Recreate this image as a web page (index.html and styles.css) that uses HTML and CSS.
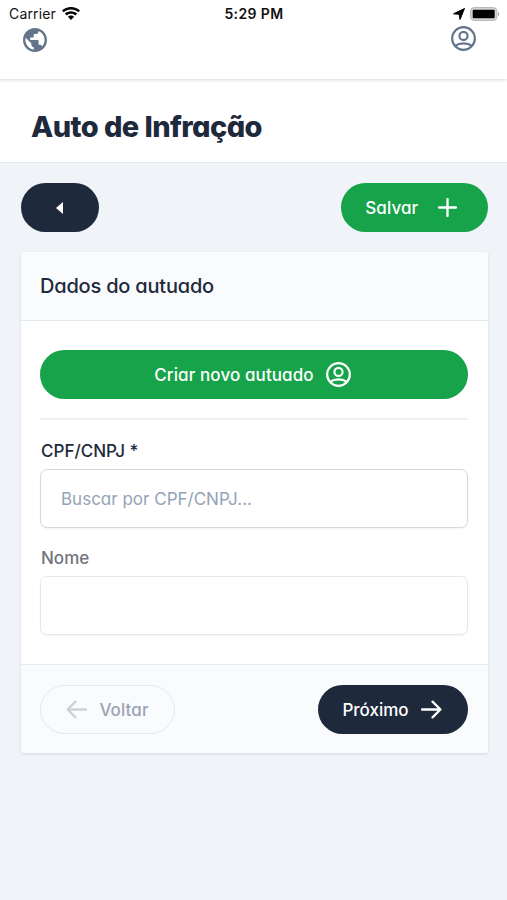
FILE: index.html
```html
<!DOCTYPE html>
<html lang="pt-BR">
<head>
<meta charset="utf-8">
<title>Auto de Infração</title>
<link rel="stylesheet" href="styles.css">
</head>
<body>
<svg class="defs" width="0" height="0" aria-hidden="true">
  <symbol id="user" viewBox="0 0 24 24" fill="none" stroke="currentColor" stroke-width="2.1">
    <circle cx="12" cy="12" r="10.900"/><circle cx="12" cy="9.500" r="3.900"/><path d="M4 19c4-3 12-3 16 0"/>
  </symbol>
</svg>
<header class="topbar">
  <div class="status">
    <div class="status-left"><span class="carrier">Carrier</span>
      <svg class="wifi" viewBox="0 0 18 13"><path d="M9 0c3.500 0 6.600 1.300 9 3.500l-1.700 1.800C14.400 3.500 11.800 2.500 9 2.500S3.600 3.500 1.700 5.300L0 3.500C2.400 1.300 5.500 0 9 0zm0 4.300c2.300 0 4.500.9 6.100 2.300l-1.700 1.800C12.200 7.300 10.700 6.700 9 6.700s-3.200.6-4.400 1.700L2.900 6.600C4.500 5.200 6.700 4.300 9 4.300zm0 4.200c1.200 0 2.300.5 3.100 1.200L9 13 5.900 9.700C6.700 9 7.800 8.500 9 8.500z"/></svg>
    </div>
    <span class="clock">5:29 PM</span>
    <div class="status-right">
      <svg class="loc" viewBox="0 0 12 12"><path d="M11.500.5 7 11.500 6.200 6.300.5 5.800z" stroke="#000" stroke-linejoin="round"/></svg>
      <svg class="battery" viewBox="0 0 30 14"><rect x=".6" y=".6" width="26.300" height="12.800" rx="3.500" fill="#d5d5d1" stroke="#b5b5b2"/><rect x="2.700" y="2.700" width="22" height="8.600" rx="1"/><path d="M28 4.700c1.600.6 1.600 4 0 4.600z" fill="#aaa"/></svg>
    </div>
  </div>
  <nav class="nav">
    <svg class="globe" viewBox="2 2 20 20"><path d="M12 2C6.480 2 2 6.480 2 12s4.480 10 10 10 10-4.480 10-10S17.520 2 12 2zm-1 17.930c-3.950-.49-7-3.850-7-7.930 0-.62.080-1.210.210-1.790L9 15v1c0 1.100.9 2 2 2v1.930zm6.900-2.540c-.26-.81-1-1.390-1.900-1.390h-1v-3c0-.55-.45-1-1-1H8v-2h2c.55 0 1-.45 1-1V7h2c1.100 0 2-.9 2-2v-.41c2.930 1.190 5 4.060 5 7.410 0 2.080-.8 3.970-2.100 5.390z"/></svg>
    <svg class="profile"><use href="#user"/></svg>
  </nav>
</header>
<section class="title-bar"><h1>Auto de Infração</h1></section>
<main>
  <div class="toolbar">
    <button class="btn dark back" aria-label="Voltar"><svg class="caret" viewBox="0 0 7 12"><path d="M7 0v12L0 6z"/></svg></button>
    <button class="btn green save"><span>Salvar</span><svg class="plus" viewBox="0 0 18 18"><path d="M9 1v16M1 9h16"/></svg></button>
  </div>
  <section class="card">
    <h2>Dados do autuado</h2>
    <div class="card-body">
      <button class="btn green create"><span>Criar novo autuado</span><svg class="user-icon"><use href="#user"/></svg></button>
      <hr>
      <label for="cpf">CPF/CNPJ *</label>
      <input id="cpf" placeholder="Buscar por CPF/CNPJ...">
      <label class="muted" for="nome">Nome</label>
      <input id="nome" class="disabled" disabled>
    </div>
    <footer>
      <button class="btn ghost"><svg class="arrow" viewBox="0 0 20 18"><path d="M19 9H2M9 1.500 1.500 9 9 16.500"/></svg><span>Voltar</span></button>
      <button class="btn dark next"><span>Próximo</span><svg class="arrow" viewBox="0 0 20 18"><path d="M1 9h17M11 1.500 18.500 9 11 16.500"/></svg></button>
    </footer>
  </section>
</main>
</body>
</html>
```

FILE: styles.css
```css
* { box-sizing: border-box; }
body { margin: 0; min-height: 900px; background: #f0f4f8; color: #1e293b; font-family: Inter, sans-serif; font-feature-settings: "cv11"; }
svg { display: block; flex: none; }
.defs { position: absolute; }
.topbar { height: 79px; background: #fff; position: relative; box-shadow: 0 1px 3px rgba(0,0,0,.16); }
.status { display: grid; grid-template-columns: 1fr auto 1fr; align-items: center; height: 27px; padding: 0 7px 0 9px; color: #111; font-feature-settings: normal; }
.status-left, .status-right { display: flex; align-items: center; }
.status-left { gap: 6px; }
.status-right { justify-content: flex-end; gap: 5px; }
.carrier { font-size: 14px; letter-spacing: .15px; }
.clock { font-size: 14px; font-weight: 600; letter-spacing: .4px; margin-left: -1px; }
.wifi { width: 18px; height: 13px; }
.loc { width: 12px; height: 12px; }
.battery { width: 30px; height: 14px; }
.nav { display: flex; justify-content: space-between; padding: 0 31.500px 0 23px; color: #64748b; }
.globe { width: 24px; height: 24px; fill: currentColor; margin-top: 1px; }
.profile { width: 25px; height: 25px; margin-top: -1px; }
.title-bar { height: 84px; padding: 28px 31px 0; background: #fff; border-bottom: 1px solid #e2e8f0; }
h1 { margin: 0; font-size: 29px; line-height: 40px; font-weight: 800; letter-spacing: -.58px; }
main { padding: 20px 19.500px 0 20.500px; }
.toolbar { display: flex; justify-content: space-between; margin-bottom: 20px; }
.btn { display: flex; align-items: center; justify-content: center; height: 49px; border: 0; border-radius: 25px; padding: 0; font: 500 17px/24px Inter, sans-serif; font-feature-settings: inherit; color: #fff; }
.dark { background: #1e293b; }
.green { background: #16a34a; }
.back { width: 78px; }
.caret { width: 7px; height: 12px; fill: #fff; }
.save { width: 146.500px; gap: 20px; padding-right: 6px; letter-spacing: .1px; }
.plus { width: 19px; height: 19px; }
.plus path, .arrow path { fill: none; stroke: currentColor; stroke-width: 2.200; stroke-linecap: round; stroke-linejoin: round; }
.card { height: 501px; display: flex; flex-direction: column; background: #fff; border-radius: 3px; box-shadow: 0 1px 3px rgba(15,23,42,.13); overflow: hidden; }
h2 { margin: 0; height: 69px; padding: 0 19.500px; background: #f9fbfd; border-bottom: 1px solid #e2e8f0; font-size: 20px; line-height: 68px; font-weight: 500; letter-spacing: -.2px; }
.card-body { flex: 1; padding: 29px 19.500px 0; display: flex; flex-direction: column; }
.create { gap: 12px; padding-right: 3px; letter-spacing: .1px; }
.user-icon { width: 25px; height: 25px; }
hr { width: 100%; height: 2px; margin: 19px 0; border: 0; background: #edeff1; }
label { height: 24px; margin-bottom: 6px; padding-left: 1px; font-size: 17px; line-height: 24px; font-weight: 500; }
.muted { color: #71757d; }
input { width: 100%; height: 59px; margin: 0 0 18px; padding: 0 20px; border: 1.500px solid #d5d8de; border-radius: 7px; background: #fff; font: 400 17px Inter, sans-serif; font-feature-settings: inherit; box-shadow: 0 1px 2px rgba(0,0,0,.05); }
input::placeholder { color: #94a3b8; opacity: 1; }
.disabled { border-color: #e6e8eb; }
footer { height: 89px; padding: 20px 19.500px 19px; display: flex; justify-content: space-between; border-top: 1px solid #e8ebef; background: #f9fbfd; }
.arrow { width: 21px; height: 19px; }
.ghost { width: 135px; gap: 12px; border: 1px solid #e5e8ec; background: transparent; color: #9ca3b5; letter-spacing: .1px; }
.ghost .arrow { color: #cdd1d8; }
.next { width: 150px; gap: 12px; padding-right: 2px; }
```
